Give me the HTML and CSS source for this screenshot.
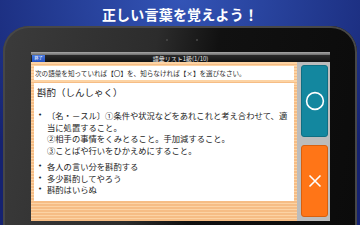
FILE: index.html
```html
<!DOCTYPE html>
<html lang="ja">
<head>
<meta charset="utf-8">
<link rel="stylesheet" href="styles.css">
</head>
<body>
<h1 class="headline">正しい言葉を覚えよう！</h1>
<div class="tablet">
  <div class="sensors"><span class="dot"></span><span class="dot"></span></div>
  <div class="screen">
    <div class="statusline"></div>
    <div class="titlebar">
      <span class="quit">終了</span>
      <span class="title">語彙リスト1級(1/10)</span>
      <span></span>
    </div>
    <div class="main">
      <div class="content">
        <div class="instruction">次の語彙を知っていれば【〇】を、知らなければ【×】を選びなさい。</div>
        <div class="card">
          <div class="word">斟酌（しんしゃく）</div>
          <ul class="defs">
            <li>〔名・－スル〕①条件や状況などをあれこれと考え合わせて、適当に処置すること。<br>②相手の事情をくみとること。手加減すること。<br>③ことばや行いをひかえめにすること。</li>
          </ul>
          <ul class="examples">
            <li>各人の言い分を斟酌する</li>
            <li>多少斟酌してやろう</li>
            <li>斟酌はいらぬ</li>
          </ul>
        </div>
      </div>
      <div class="side">
        <div class="btn yes">
          <svg width="20" height="20" viewBox="0 0 20 20"><circle cx="10" cy="10" r="8.4" fill="none" stroke="#fff" stroke-width="1.6"/></svg>
        </div>
        <div class="btn no">
          <svg width="16" height="16" viewBox="0 0 16 16"><path d="M2.5 2.5 L13.5 13.5 M13.5 2.5 L2.5 13.5" stroke="#fff" stroke-width="1.6" fill="none"/></svg>
        </div>
      </div>
    </div>
  </div>
</div>
</body>
</html>
```
FILE: styles.css
```css
html, body {
  margin: 0;
  padding: 0;
}
body {
  width: 360px;
  height: 225px;
  overflow: hidden;
  font-family: "Noto Sans CJK JP", "Noto Sans", sans-serif;
  background: radial-gradient(ellipse 70% 90% at 50% 0%, #3354b6 0%, #22398f 55%, #152270 100%);
}
.headline {
  margin: 0;
  height: 26px;
  line-height: 29px;
  font-size: 14px;
  font-weight: 700;
  color: #fff;
  text-align: center;
  letter-spacing: 0.2px;
}
.tablet {
  margin: 0 3px;
  height: 210px;
  border-radius: 26px 26px 0 0;
  padding: 0 27px 0 28px;
  box-sizing: border-box;
  background: linear-gradient(100deg, #3b3b3b 0%, #2c2c2c 40%, #111 56%, #0b0b0b 100%);
  box-shadow: inset 0 0 0 2px #474747;
}
.sensors {
  height: 26px;
  display: flex;
  justify-content: center;
  align-items: center;
  gap: 28px;
  padding-left: 3px;
  padding-top: 2px;
  box-sizing: border-box;
}
.dot {
  width: 2px;
  height: 2px;
  border-radius: 50%;
  background: #4a4a4a;
}
.screen {
  width: 299px;
  height: 169px;
  background: #101010;
  display: flex;
  flex-direction: column;
}
.statusline {
  height: 3px;
  background: linear-gradient(#a8a8a8, #6c6c6c);
}
.titlebar {
  height: 7px;
  display: grid;
  grid-template-columns: 1fr auto 1fr;
  align-items: center;
  background: linear-gradient(#2a2a2a, #141414);
}
.quit {
  justify-self: start;
  margin-left: 1px;
  width: 13px;
  height: 7px;
  background: linear-gradient(#4a7be0, #2450c0);
  color: #fff;
  font-size: 4px;
  line-height: 7px;
  text-align: center;
}
.title {
  color: #e8e8e8;
  font-size: 6px;
  line-height: 7px;
}
.main {
  flex: 1;
  display: flex;
}
.content {
  width: 266px;
  padding: 4px 3px 0 3px;
  box-sizing: border-box;
  background: repeating-linear-gradient(#fcd3a4 0px, #fcd3a4 1.5px, #f6bd85 1.5px, #f6bd85 3px);
  display: flex;
  flex-direction: column;
  gap: 3px;
}
.instruction {
  height: 14px;
  background: #fff;
  font-size: 6.6px;
  line-height: 14px;
  padding-left: 1px;
  color: #2a2a2a;
  white-space: nowrap;
  overflow: hidden;
}
.card {
  height: 118px;
  background: #fff;
  padding: 2px 3px 0 2px;
  box-sizing: border-box;
  color: #1e1e1e;
}
.word {
  font-size: 9.5px;
  line-height: 14px;
  padding-left: 1px;
}
.defs, .examples {
  list-style: none;
  margin: 0;
  padding: 0;
  font-size: 8.3px;
  line-height: 11.5px;
}
.defs {
  margin-top: 11px;
}
.examples {
  margin-top: 5px;
}
.defs li, .examples li {
  display: flex;
}
.defs li::before, .examples li::before {
  content: "•";
  flex: 0 0 9px;
  padding-left: 2px;
  font-family: "DejaVu Sans", sans-serif;
  font-size: 7px;
}
.side {
  width: 33px;
  background: #bcbcbc;
  padding: 3px 2px 0 4px;
  box-sizing: border-box;
  display: flex;
  flex-direction: column;
  gap: 8px;
}
.btn {
  height: 72px;
  border-radius: 3px;
  display: flex;
  align-items: center;
  justify-content: center;
  box-sizing: border-box;
}
.yes {
  background: #13879f;
  border: 1px solid #0f6f83;
}
.no {
  background: #ff7517;
  border: 1px solid #d9600e;
}
```
